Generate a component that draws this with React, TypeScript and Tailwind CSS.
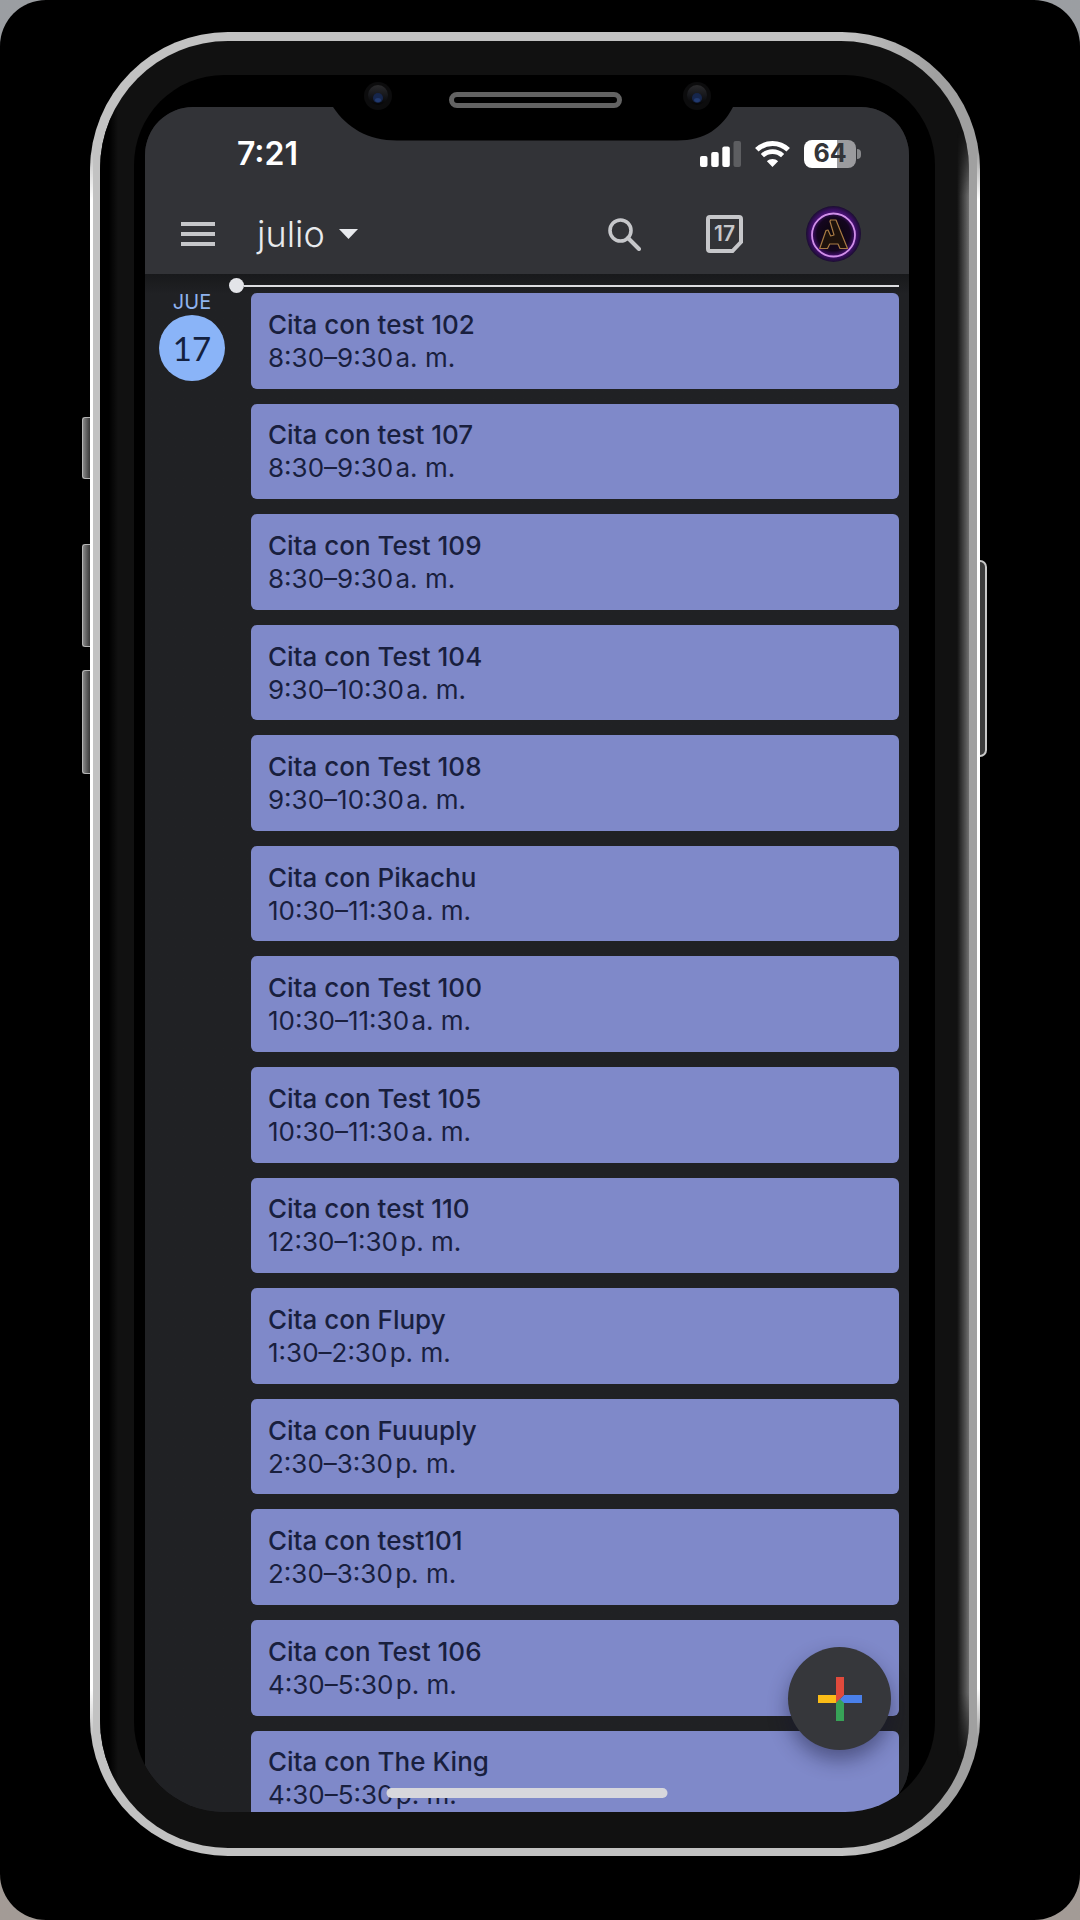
const events = [
  { title: 'Cita con test 102', time: '8:30–9:30\u200aa. m.' },
  { title: 'Cita con test 107', time: '8:30–9:30\u200aa. m.' },
  { title: 'Cita con Test 109', time: '8:30–9:30\u200aa. m.' },
  { title: 'Cita con Test 104', time: '9:30–10:30\u200aa. m.' },
  { title: 'Cita con Test 108', time: '9:30–10:30\u200aa. m.' },
  { title: 'Cita con Pikachu', time: '10:30–11:30\u200aa. m.' },
  { title: 'Cita con Test 100', time: '10:30–11:30\u200aa. m.' },
  { title: 'Cita con Test 105', time: '10:30–11:30\u200aa. m.' },
  { title: 'Cita con test 110', time: '12:30–1:30\u200ap. m.' },
  { title: 'Cita con Flupy', time: '1:30–2:30\u200ap. m.' },
  { title: 'Cita con Fuuuply', time: '2:30–3:30\u200ap. m.' },
  { title: 'Cita con test101', time: '2:30–3:30\u200ap. m.' },
  { title: 'Cita con Test 106', time: '4:30–5:30\u200ap. m.' },
  { title: 'Cita con The King', time: '4:30–5:30\u200ap. m.' },
];

function SignalIcon() {
  return (
    <svg width="41" height="26" viewBox="0 0 41 26" aria-hidden="true">
      <rect x="0" y="15" width="7.5" height="11" rx="2" fill="#fff" />
      <rect x="11.2" y="11" width="7.5" height="15" rx="2" fill="#fff" />
      <rect x="22.3" y="5.5" width="7.5" height="20.5" rx="2" fill="#fff" />
      <rect x="33.5" y="0" width="7.5" height="26" rx="2" fill="#5d5e61" />
    </svg>
  );
}

function WifiIcon() {
  return (
    <svg width="35" height="26" viewBox="0 0 35 26" fill="none" aria-hidden="true">
      <path d="M1.8 8.8C10.5 .4 24.5 .4 33.2 8.8" stroke="#fff" strokeWidth="5" />
      <path d="M7.4 14.6C13 9.3 22 9.3 27.6 14.6" stroke="#fff" strokeWidth="4.6" />
      <path d="M17.5 26L11.9 20.2C15 17.2 20 17.2 23.1 20.2Z" fill="#fff" />
    </svg>
  );
}

function Battery() {
  return (
    <div className="flex items-center gap-px" role="img" aria-label="Batería 64%">
      <div className="flex h-7 w-[52px] items-center justify-center rounded-lg bg-linear-to-r from-white from-63% to-[#9b9b9e] to-63% text-[25px] font-bold text-[#333438]">
        64
      </div>
      <div className="h-[10px] w-1 rounded-r-full bg-[#88898c]" />
    </div>
  );
}

function Avatar() {
  return (
    <svg width="55" height="56" viewBox="0 0 55 56" fill="none" aria-hidden="true">
      <defs>
        <radialGradient id="glow">
          <stop offset="0" stopColor="#0a0508" />
          <stop offset="0.6" stopColor="#14061f" />
          <stop offset="0.8" stopColor="#461073" />
          <stop offset="1" stopColor="#1a0d30" />
        </radialGradient>
      </defs>
      <ellipse cx="27.5" cy="28" rx="27.5" ry="28" fill="url(#glow)" />
      <circle cx="27.5" cy="29" r="21.5" stroke="#d08fe8" strokeWidth="1.8" />
      <path
        d="M24.5 14H30L41.5 42.5H34L32 38H23.7L21.5 42.5H13.7L20 24.5L22 24L24.7 30L28 29L24 15.5Z"
        fill="#1e120c"
        stroke="#a87a44"
        strokeWidth="1.2"
        strokeLinejoin="round"
      />
    </svg>
  );
}

function Camera({ cx }: { cx: number }) {
  return (
    <g>
      <circle cx={cx} cy="21" r="14" fill="#0c0c0d" />
      <circle cx={cx} cy="20" r="10" fill="url(#lens)" />
      <ellipse cx={cx} cy="23" rx="5" ry="5" fill="#16264c" />
      <ellipse cx={cx} cy="25" rx="3" ry="2" fill="#223a70" />
    </g>
  );
}

function Notch() {
  return (
    <svg
      className="absolute top-0 left-1/2 -translate-x-1/2"
      width="404"
      height="66"
      viewBox="0 0 404 66"
      fill="none"
      aria-hidden="true"
    >
      <defs>
        <linearGradient id="lens" x1="0" y1="0" x2="0" y2="1">
          <stop offset="0" stopColor="#2a2a2c" />
          <stop offset="0.5" stopColor="#17181c" />
          <stop offset="1" stopColor="#050506" />
        </linearGradient>
      </defs>
      <path d="M0 0V32C14 53 35 65.500 64 65.500H344C372 65.500 389 53 400 32V0Z" fill="#000" />
      <Camera cx={45} />
      <Camera cx={364} />
      <rect x="118.500" y="19.500" width="168" height="11" rx="5.500" stroke="#636363" strokeWidth="5" />
    </svg>
  );
}

function StatusBar() {
  return (
    <div className="flex h-[94px] items-center justify-between pr-12 pl-[92px]">
      <span className="text-[32px] leading-9 font-semibold text-white">7:21</span>
      <div className="flex items-center gap-[14px]">
        <SignalIcon />
        <WifiIcon />
        <Battery />
      </div>
    </div>
  );
}

function Toolbar() {
  return (
    <nav className="flex h-[66px] items-center justify-between pr-12 pl-9">
      <div className="flex items-center gap-[42px]">
        <button type="button" aria-label="Menú" className="flex w-[34px] flex-col gap-[6px]">
          <span className="h-1 bg-[#c6c7ca]" />
          <span className="h-1 bg-[#c6c7ca]" />
          <span className="h-1 bg-[#c6c7ca]" />
        </button>
        <button type="button" className="flex items-center gap-[14px] text-[36px] leading-10 font-light text-[#e8eaed]">
          julio
          <svg width="19" height="10" viewBox="0 0 19 10" aria-hidden="true">
            <path d="M0 0H19L9.500 10Z" fill="#e8eaed" />
          </svg>
        </button>
      </div>
      <div className="flex items-center">
        <button type="button" aria-label="Buscar" className="mr-[65px]">
          <svg width="33" height="33" viewBox="0 0 33 33" fill="none" stroke="#c6c7ca" aria-hidden="true">
            <circle cx="12.500" cy="12.500" r="10.500" strokeWidth="3.600" />
            <path d="M20 20L31 31" strokeWidth="4" strokeLinecap="round" />
          </svg>
        </button>
        <button type="button" aria-label="Ir a hoy" className="relative mr-[63px]">
          <svg width="37" height="38" viewBox="0 0 37 38" fill="none" aria-hidden="true">
            <path
              d="M4 2H33Q35 2 35 4V27L26.500 36H4Q2 36 2 34V4Q2 2 4 2Z"
              stroke="#c6c7ca"
              strokeWidth="4"
            />
          </svg>
          <span className="absolute inset-0 flex items-center justify-center text-[21px] font-semibold text-[#c6c7ca]">
            17
          </span>
        </button>
        <button type="button" aria-label="Cuenta">
          <Avatar />
        </button>
      </div>
    </nav>
  );
}

function Agenda() {
  return (
    <main className="flex min-h-0 flex-1 flex-col bg-linear-to-b from-[#18191b] to-[#202124] to-[20px]">
      <div className="mt-1 mr-[10px] ml-[84px] flex h-[15px] shrink-0 items-center">
        <span className="size-[15px] rounded-full bg-[#e3e4e8]" />
        <span className="h-[2px] flex-1 bg-[#dcdde0]" />
      </div>
      <div className="-mb-[14px] flex flex-1 pr-[10px]">
        <div className="flex w-[106px] shrink-0 flex-col items-center gap-1 pr-3">
          <span className="text-[20px] leading-[18px] text-[#8fb3ee]">JUE</span>
          <span className="flex size-[66px] items-center justify-center rounded-full bg-[#8ab4f8] font-[Lato] text-[33px] leading-none text-[#14213f]">
            17
          </span>
        </div>
        <ul className="flex flex-1 flex-col gap-[15px]">
          {events.map((event) => (
            <li key={event.title} className="flex flex-1">
              <button
                type="button"
                className="flex flex-1 flex-col justify-center rounded-md bg-[#7f89c9] px-[17px] text-left text-[26px] leading-[33px] text-[#191f3e]"
              >
                <span className="font-medium">{event.title}</span>
                <span>{event.time}</span>
              </button>
            </li>
          ))}
        </ul>
      </div>
    </main>
  );
}

function CreateButton() {
  return (
    <button
      type="button"
      aria-label="Crear"
      className="absolute right-[18px] bottom-[62px] flex size-[103px] items-center justify-center rounded-full bg-[#36373b] shadow-[0_10px_20px_rgba(20,20,50,0.45)]"
    >
      <svg width="44" height="44" viewBox="0 0 44 44" aria-hidden="true">
        <path d="M0 18H18L22 22L18 26H0Z" fill="#fbbc17" />
        <path d="M44 18H26L18 26H44Z" fill="#4a80ea" />
        <path d="M18 0H26V18L18 26Z" fill="#e04a3c" />
        <path d="M18 44V26L22 22L26 26V44Z" fill="#37a257" />
      </svg>
    </button>
  );
}

function Screen() {
  return (
    <div className="relative mt-8 mr-[26px] ml-[11px] flex min-h-0 flex-1 flex-col overflow-hidden rounded-[48px] bg-[#202124]">
      <header className="shrink-0 bg-[#323337] pb-[7px]">
        <StatusBar />
        <Toolbar />
      </header>
      <Agenda />
      <CreateButton />
      <div className="absolute bottom-[14px] left-1/2 h-[10px] w-[281px] -translate-x-1/2 rounded-full bg-[#d7d7dc]" />
    </div>
  );
}

function SideButton({ className }: { className: string }) {
  return (
    <span
      className={
        'absolute -left-2 w-2 rounded-l-[3px] border border-r-0 border-[#b5b5b5] bg-linear-to-r from-[#8a8a8a] to-[#3a3a3a] ' +
        className
      }
    />
  );
}

export default function App() {
  return (
    <div className="h-screen bg-linear-to-b from-[#9b9ea2] to-[#a39b96] font-[Inter,sans-serif]">
      <div className="flex h-full flex-col rounded-[46px] bg-black pt-8 pr-[100px] pb-16 pl-[90px]">
        <div className="relative flex min-h-0 flex-1 flex-col rounded-[138px] bg-linear-to-r from-[#c2c2c2] from-85% to-[#a0a0a0] to-95% pt-[9px] pr-[11px] pb-2 pl-[10px]">
          <span className="absolute top-[120px] bottom-[120px] left-0 w-[3px] bg-white mask-t-from-97% mask-b-from-97%" />
          <span className="absolute top-[120px] right-0 bottom-[120px] w-[3px] bg-white mask-t-from-97% mask-b-from-97%" />
          <SideButton className="top-[385px] h-[62px]" />
          <SideButton className="top-[512px] h-[103px]" />
          <SideButton className="top-[638px] h-[104px]" />
          <span className="absolute top-[528px] -right-[7px] h-[197px] w-[7px] rounded-r-lg border-2 border-l-0 border-[#c8c8c8] bg-[#3c3c3c]" />
          <div className="relative flex min-h-0 flex-1 flex-col overflow-hidden rounded-[128px] bg-[#111111] pt-[34px] pr-[34px] pb-[36px] pl-[34px]">
            <span className="absolute inset-y-0 left-0 w-[18px] bg-linear-to-r from-black from-50% to-transparent" />
            <span className="absolute top-[90px] right-0 bottom-[90px] w-3 bg-linear-to-r from-transparent to-[#707070] mask-t-from-96% mask-b-from-96%" />
            <div className="relative flex min-h-0 flex-1 flex-col overflow-hidden rounded-[90px] bg-black">
              <Screen />
              <Notch />
            </div>
          </div>
        </div>
      </div>
    </div>
  );
}
